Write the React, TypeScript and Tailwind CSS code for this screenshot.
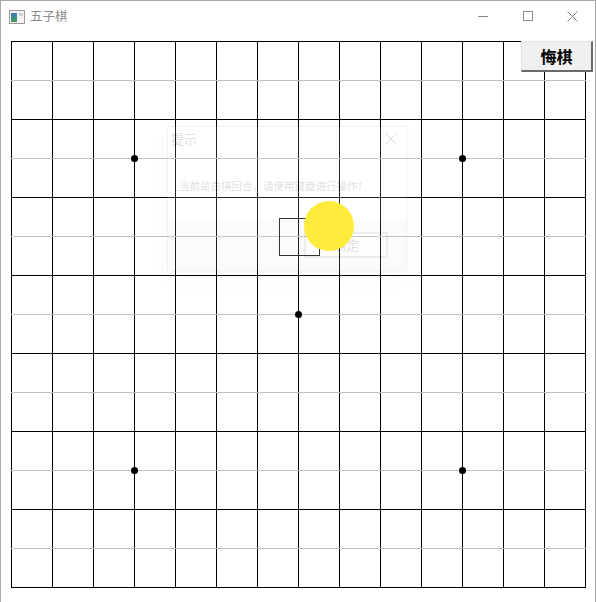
import React from "react";

const COLS = 15;
const ROWS = 15;
const CELL_W = 41;
const CELL_H = 39;
const STARS: [number, number][] = [
  [3, 3],
  [11, 3],
  [7, 7],
  [3, 11],
  [11, 11],
];

function WindowIcon() {
  return (
    <svg width="16" height="14" viewBox="0 0 16 14" aria-hidden="true">
      <rect x="0.5" y="0.5" width="15" height="13" fill="#f4f4f4" stroke="#9a9a9a" />
      <defs>
        <linearGradient id="pane" x1="0" y1="0" x2="0" y2="1">
          <stop offset="0" stopColor="#3d7bb8" />
          <stop offset="1" stopColor="#3f9a5a" />
        </linearGradient>
      </defs>
      <rect x="2" y="3" width="6" height="9" fill="url(#pane)" />
      <rect x="10" y="3" width="4" height="3" fill="#c9d3dc" />
    </svg>
  );
}

function TitleBar() {
  return (
    <div className="flex h-[30px] items-center">
      <div className="ml-[8px] mt-[1px] flex items-center">
        <WindowIcon />
      </div>
      <span className="ml-[5px] text-[12.5px] leading-none text-[#8a8a8a]">五子棋</span>
      <div className="ml-auto flex h-full items-center">
        <div className="flex h-full w-[45px] items-center justify-center">
          <div className="h-px w-[10px] bg-[#8a8a8a]" />
        </div>
        <div className="flex h-full w-[45px] items-center justify-center">
          <div className="h-[10px] w-[10px] border border-[#8a8a8a]" />
        </div>
        <div className="flex h-full w-[45px] items-center justify-center">
          <svg width="11" height="11" viewBox="0 0 11 11" aria-hidden="true">
            <path d="M0.5 0.5 L10.5 10.5 M10.5 0.5 L0.5 10.5" stroke="#8a8a8a" strokeWidth="1" />
          </svg>
        </div>
      </div>
    </div>
  );
}

function Board() {
  const w = CELL_W * (COLS - 1) + 1;
  const h = CELL_H * (ROWS - 1) + 1;
  return (
    <svg width={w} height={h} className="block" shapeRendering="crispEdges">
      {Array.from({ length: COLS }, (_, i) => (
        <line key={`v${i}`} x1={i * CELL_W + 0.5} y1={0} x2={i * CELL_W + 0.5} y2={h} stroke="#000" />
      ))}
      {Array.from({ length: ROWS }, (_, j) => (
        <line
          key={`h${j}`}
          x1={0}
          y1={j * CELL_H + 0.5}
          x2={w}
          y2={j * CELL_H + 0.5}
          stroke={j % 2 === 0 ? "#000" : "#c0c0c0"}
        />
      ))}
      {STARS.map(([c, r]) => (
        <circle key={`${c}-${r}`} cx={c * CELL_W + 0.5} cy={r * CELL_H + 0.5} r={3.5} fill="#000" shapeRendering="auto" />
      ))}
    </svg>
  );
}

function FadingDialog() {
  return (
    <div className="absolute left-[166px] top-[125px] flex h-[145px] w-[240px] flex-col border border-[#9a9a9a] bg-white opacity-[0.13] shadow-lg">
      <div className="flex h-[24px] items-center justify-between px-[3px]">
        <span className="text-[13px] text-black">提示</span>
        <svg width="12" height="12" viewBox="0 0 12 12" className="mr-[6px]" aria-hidden="true">
          <path d="M0.5 0.5 L11.5 11.5 M11.5 0.5 L0.5 11.5" stroke="#000" />
        </svg>
      </div>
      <div className="flex h-[69px] items-center pl-[11px] text-[10.5px] text-black">
        当前是白棋回合，请使用键盘进行操作！
      </div>
      <div className="flex flex-1 items-start justify-end bg-[#e8e8e8] pr-[18px] pt-[12px]">
        <div className="flex h-[26px] w-[84px] items-center justify-center border-2 border-[#7a7a7a] bg-[#f2f2f2] text-[13px] text-black">
          确定
        </div>
      </div>
    </div>
  );
}

export default function App() {
  return (
    <div
      className="relative h-[602px] w-[596px] overflow-hidden border-l border-r border-t border-[#a8a8a8] bg-white"
      style={{ fontFamily: '"Noto Sans CJK SC", "Noto Sans", sans-serif' }}
    >
      <TitleBar />
      <div className="ml-[10px] mt-[10px]">
        <Board />
      </div>

      <FadingDialog />

      <button
        type="button"
        className="absolute left-[520px] top-[40px] flex h-[31px] w-[72px] items-center justify-center border border-b-2 border-r-2 border-l-[#e3e3e3] border-t-[#e3e3e3] border-b-[#6a6a6a] border-r-[#6a6a6a] bg-[#f0f0f0] text-[16px] font-bold text-black"
      >
        悔棋
      </button>

      <div className="absolute left-[278px] top-[217px] h-[38px] w-[41px] border border-[#333]" />
      <div className="absolute left-[303px] top-[200px] h-[50px] w-[50px] rounded-full bg-[#ffeb3b]" />
    </div>
  );
}
